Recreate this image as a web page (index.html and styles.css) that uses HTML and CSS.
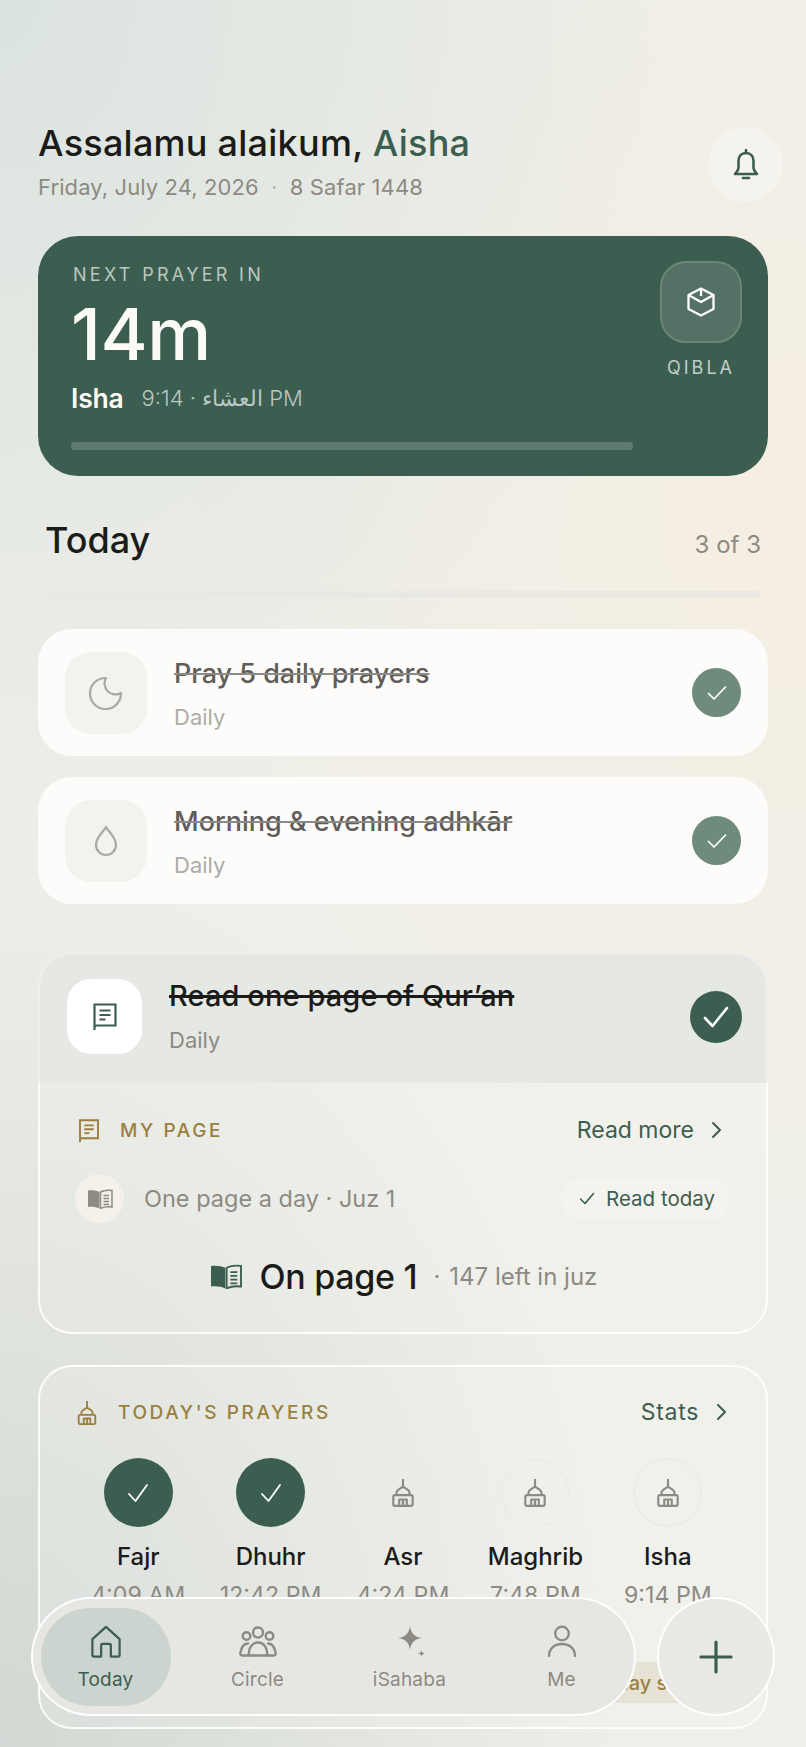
FILE: index.html
```html
<!DOCTYPE html>
<html lang="en">
<head>
<meta charset="utf-8">
<title>Today</title>
<link rel="stylesheet" href="styles.css">
</head>
<body>
<main class="page">
  <header class="top">
    <div>
      <h1 class="greet">Assalamu alaikum, <span class="greet-name">Aisha</span></h1>
      <p class="date">Friday, July 24, 2026 <span class="date-dot">·</span> 8 Safar 1448</p>
    </div>
    <button class="bell" aria-label="Notifications">
      <svg width="26" height="32" viewBox="0 0 26 32" fill="none" stroke="#3c5e50" stroke-width="2.6" stroke-linejoin="round"><path d="M13 4c-5 0-7.500 3.500-7.500 8v7c0 2-1.500 3.500-3.500 6h22c-2-2.500-3.500-4-3.500-6v-7c0-4.500-2.500-8-7.500-8Z"/><path d="M13 1v3" stroke-linecap="round"/><path d="M10 29h6" stroke-linecap="round"/></svg>
    </button>
  </header>

  <section class="hero">
    <div class="hero-main">
      <div class="hero-label">NEXT PRAYER IN</div>
      <div class="hero-time">14m</div>
      <div class="hero-next"><strong class="hero-name">Isha</strong><span class="hero-detail">9:14 · العشاء PM</span></div>
      <div class="hero-bar"></div>
    </div>
    <div class="qibla">
      <div class="qibla-box">
        <svg width="30" height="30" viewBox="0 0 30 30" fill="none" stroke="#fff" stroke-width="2.300" stroke-linejoin="round"><path d="M15 1.500 27.500 8v14L15 28.500 2.500 22V8Z"/><path d="M2.500 8 15 15l12.500-7"/><path d="M15 1.500V9"/></svg>
      </div>
      <div class="qibla-label">QIBLA</div>
    </div>
  </section>

  <section class="today">
    <div class="today-head">
      <h2 class="today-title">Today</h2>
      <span class="today-count">3 of 3</span>
    </div>
    <div class="today-track"></div>
  </section>

  <article class="task">
    <div class="task-icon">
      <svg width="34" height="34" viewBox="0 0 34 34" fill="none" stroke="#a9a8a3" stroke-width="2.200" stroke-linejoin="round"><path d="M17 2a11 11 0 0 0 15 15 15.500 15.500 0 1 1-15-15Z"/></svg>
    </div>
    <div class="task-text">
      <div class="task-title">Pray 5 daily prayers</div>
      <div class="task-sub">Daily</div>
    </div>
    <div class="check check-soft">
      <svg width="20" height="16" viewBox="0 0 20 16" fill="none" stroke="#fff" stroke-width="1.700" stroke-linecap="round" stroke-linejoin="round"><path d="M1.500 8.500 7 14 18.500 2"/></svg>
    </div>
  </article>

  <article class="task task-second">
    <div class="task-icon">
      <svg width="24" height="32" viewBox="0 0 24 32" fill="none" stroke="#a9a8a3" stroke-width="2.200" stroke-linejoin="round"><path d="M12 2c3 5.500 10 10 10 18a10 10 0 0 1-20 0C2 12 9 7.500 12 2Z"/></svg>
    </div>
    <div class="task-text">
      <div class="task-title">Morning &amp; evening adhkār</div>
      <div class="task-sub">Daily</div>
    </div>
    <div class="check check-soft">
      <svg width="20" height="16" viewBox="0 0 20 16" fill="none" stroke="#fff" stroke-width="1.700" stroke-linecap="round" stroke-linejoin="round"><path d="M1.500 8.500 7 14 18.500 2"/></svg>
    </div>
  </article>

  <article class="quran">
    <div class="quran-head">
      <div class="quran-icon">
        <svg width="24" height="28" viewBox="0 0 24 28" fill="none" stroke="#3c5e50" stroke-width="2.200"><path d="M1.500 27V1.500h21v21H4c-1.500 0-2.500 1-2.500 2.500"/><path d="M6.500 7.500h11M6.500 12h11M6.500 16.500h6"/></svg>
      </div>
      <div class="quran-text">
        <div class="quran-title">Read one page of Qur’an</div>
        <div class="task-sub task-sub-dark">Daily</div>
      </div>
      <div class="check check-strong">
        <svg width="26" height="22" viewBox="0 0 26 22" fill="none" stroke="#fff" stroke-width="2.600" stroke-linecap="round" stroke-linejoin="round"><path d="M2 12l7.500 8L24 2"/></svg>
      </div>
    </div>
    <div class="quran-body">
      <div class="row-head">
        <div class="row-label">
          <svg class="label-icon" width="22" height="24" viewBox="0 0 24 28" fill="none" stroke="#9a7f3f" stroke-width="2.200"><path d="M1.500 27V1.500h21v21H4c-1.500 0-2.500 1-2.500 2.500"/><path d="M6.500 7.500h11M6.500 12h11M6.500 16.500h6"/></svg>
          <span class="label-text">MY PAGE</span>
        </div>
        <div class="row-link"><span>Read more</span><svg width="11" height="18" viewBox="0 0 11 18" fill="none" stroke="#3c5e50" stroke-width="2" stroke-linecap="round" stroke-linejoin="round"><path d="M2 2l7 7-7 7"/></svg></div>
      </div>
      <div class="plan">
        <div class="plan-icon">
          <svg width="26" height="20" viewBox="0 0 26 20" fill="none"><path d="M12.500 3C9.500 1.500 5 1 1 1.500v16.500c4-.5 8.500 0 11.500 1.500Z" fill="#8d8a83"/><path d="M13.500 3c3-1.500 7.500-2 11.500-1.500V18c-4-.5-8.500 0-11.500 1.500Z" stroke="#8d8a83" stroke-width="1.500"/><path d="M16.500 6.500h5.500M16.500 9.500h5.500M16.500 12.500h5.500M16.500 15.500h5.500" stroke="#8d8a83" stroke-width="1.300"/></svg>
        </div>
        <span class="plan-text">One page a day · Juz 1</span>
        <div class="pill">
          <svg width="16" height="13" viewBox="0 0 16 13" fill="none" stroke="#3c5e50" stroke-width="1.600" stroke-linecap="round" stroke-linejoin="round"><path d="M1.500 7 6 11.500 14.500 1.500"/></svg>
          <span>Read today</span>
        </div>
      </div>
      <div class="onpage">
        <svg class="onpage-icon" width="34" height="25" viewBox="0 0 26 20" fill="none"><path d="M12.500 3C9.500 1.500 5 1 1 1.500v16.500c4-.5 8.500 0 11.500 1.500Z" fill="#3c5e50"/><path d="M13.500 3c3-1.500 7.500-2 11.500-1.500V18c-4-.5-8.500 0-11.500 1.500Z" stroke="#3c5e50" stroke-width="1.500"/><path d="M16.500 6.500h5.500M16.500 9.500h5.500M16.500 12.500h5.500M16.500 15.500h5.500" stroke="#3c5e50" stroke-width="1.300"/></svg>
        <strong class="onpage-num">On page 1</strong>
        <span class="onpage-dot">·</span>
        <span class="onpage-rest">147 left in juz</span>
      </div>
    </div>
  </article>

  <article class="prayers">
    <div class="prayers-head">
      <div class="row-label">
        <svg class="label-icon" width="22" height="24" viewBox="0 0 22 26" fill="none" stroke="#9a7f3f" stroke-width="2" stroke-linejoin="round"><path d="M11 0v7"/><path d="M5 15v-2.500C5 10 8.500 9 11 7c2.500 2 6 3 6 5.500V15"/><rect x="2" y="15" width="18" height="10" rx="1.500"/><path d="M7.500 25v-6h7v6M11 19v6"/></svg>
        <span class="label-text">TODAY'S PRAYERS</span>
      </div>
      <div class="row-link row-link-wide"><span>Stats</span><svg width="11" height="18" viewBox="0 0 11 18" fill="none" stroke="#3c5e50" stroke-width="2" stroke-linecap="round" stroke-linejoin="round"><path d="M2 2l7 7-7 7"/></svg></div>
    </div>
    <div class="times">
      <div class="time">
        <div class="time-dot time-done"><svg width="22" height="20" viewBox="0 0 22 20" fill="none" stroke="#fff" stroke-width="1.800" stroke-linecap="round" stroke-linejoin="round"><path d="M2 11l6.500 7L20 2"/></svg></div>
        <div class="time-name">Fajr</div><div class="time-at">4:09 AM</div>
      </div>
      <div class="time">
        <div class="time-dot time-done"><svg width="22" height="20" viewBox="0 0 22 20" fill="none" stroke="#fff" stroke-width="1.800" stroke-linecap="round" stroke-linejoin="round"><path d="M2 11l6.500 7L20 2"/></svg></div>
        <div class="time-name">Dhuhr</div><div class="time-at">12:42 PM</div>
      </div>
      <div class="time">
        <div class="time-dot"><svg width="24" height="28" viewBox="0 0 22 26" fill="none" stroke="#8d8a83" stroke-width="2" stroke-linejoin="round"><path d="M11 0v7"/><path d="M5 15v-2.500C5 10 8.500 9 11 7c2.500 2 6 3 6 5.500V15"/><rect x="2" y="15" width="18" height="10" rx="1.500"/><path d="M7.500 25v-6h7v6M11 19v6"/></svg></div>
        <div class="time-name">Asr</div><div class="time-at">4:24 PM</div>
      </div>
      <div class="time">
        <div class="time-dot"><svg width="24" height="28" viewBox="0 0 22 26" fill="none" stroke="#8d8a83" stroke-width="2" stroke-linejoin="round"><path d="M11 0v7"/><path d="M5 15v-2.500C5 10 8.500 9 11 7c2.500 2 6 3 6 5.500V15"/><rect x="2" y="15" width="18" height="10" rx="1.500"/><path d="M7.500 25v-6h7v6M11 19v6"/></svg></div>
        <div class="time-name">Maghrib</div><div class="time-at">7:48 PM</div>
      </div>
      <div class="time">
        <div class="time-dot"><svg width="24" height="28" viewBox="0 0 22 26" fill="none" stroke="#8d8a83" stroke-width="2" stroke-linejoin="round"><path d="M11 0v7"/><path d="M5 15v-2.500C5 10 8.500 9 11 7c2.500 2 6 3 6 5.500V15"/><rect x="2" y="15" width="18" height="10" rx="1.500"/><path d="M7.500 25v-6h7v6M11 19v6"/></svg></div>
        <div class="time-name">Isha</div><div class="time-at">9:14 PM</div>
      </div>
    </div>
    <div class="prayers-foot"><span class="streak">1 day streak</span></div>
  </article>
</main>

<nav class="dock">
  <div class="tabs">
    <div class="tab tab-active">
      <svg width="32" height="33" viewBox="0 0 32 34" fill="none" stroke="#3c5e50" stroke-width="2.300" stroke-linejoin="round"><path d="M2 14.500 16 2l14 12.500V31a1.500 1.500 0 0 1-1.500 1.500H21V21a1.500 1.500 0 0 0-1.500-1.500h-7A1.500 1.500 0 0 0 11 21v11.500H3.500A1.500 1.500 0 0 1 2 31Z"/></svg>
      <span>Today</span>
    </div>
    <div class="tab">
      <svg width="38" height="33" viewBox="0 0 38 32" fill="none" stroke="#8d8a83" stroke-width="2.400" stroke-linecap="round" stroke-linejoin="round"><circle cx="19" cy="7" r="5"/><circle cx="7.500" cy="10.500" r="3.800"/><circle cx="30.500" cy="10.500" r="3.800"/><path d="M10 30c-1-7 3-13 9-13s10 6 9 13Z"/><path d="M10 30H3c-2 0-2-2-1-5 1-4 3-7 7-7"/><path d="M28 30h7c2 0 2-2 1-5-1-4-3-7-7-7"/></svg>
      <span>Circle</span>
    </div>
    <div class="tab">
      <svg width="32" height="33" viewBox="0 0 32 33" fill="#8d8a83"><path d="M16 1c1 7 4 11 12 12-8 1-11 5-12 12-1-7-4-11-12-12 8-1 11-5 12-12Z"/><path d="M27.500 25c.3 2.300 1 3.100 3.500 3.500-2.500.4-3.200 1.200-3.500 3.500-.3-2.300-1-3.100-3.500-3.500 2.500-.4 3.200-1.200 3.500-3.500Z"/></svg>
      <span>iSahaba</span>
    </div>
    <div class="tab">
      <svg width="30" height="33" viewBox="0 0 30 33" fill="none" stroke="#8d8a83" stroke-width="2.300" stroke-linecap="round"><circle cx="15" cy="8.500" r="6.800"/><path d="M2 31c0-7 5-12 13-12s13 5 13 12"/></svg>
      <span>Me</span>
    </div>
  </div>
  <button class="add" aria-label="Add">
    <svg width="34" height="34" viewBox="0 0 34 34" fill="none" stroke="#3c5e50" stroke-width="3.200" stroke-linecap="round"><path d="M17 2v30M2 17h30"/></svg>
  </button>
</nav>
</body>
</html>
```

FILE: styles.css
```css
* { box-sizing: border-box; }

html, body { margin: 0; padding: 0; }

body {
  width: 806px;
  height: 1747px;
  overflow: hidden;
  position: relative;
  font-family: Inter, "DejaVu Sans", sans-serif;
  color: #1b1b19;
  background:
    radial-gradient(700px 900px at 0% 0%, #dbe3df 0%, rgba(219, 227, 223, 0) 100%),
    radial-gradient(620px 900px at 0% 100%, #d2d8d3 0%, rgba(210, 216, 211, 0) 100%),
    radial-gradient(620px 720px at 100% 30%, #f5eee2 0%, rgba(245, 238, 226, 0) 100%),
    #efefe9;
}

.page { padding: 121px 38px 0; }

.top { display: flex; justify-content: space-between; align-items: flex-end; }

.greet {
  margin: 0;
  font-size: 36px;
  line-height: 44px;
  font-weight: 500;
  letter-spacing: 0.25px;
  color: #1b1b19;
}

.greet-name { color: #3c5e50; }

.date {
  margin: 7px 0 0;
  font-size: 22px;
  line-height: 30px;
  letter-spacing: 0.1px;
  color: #8d8a83;
}

.date-dot { margin: 0 6px; color: #b5b3ac; }

.bell {
  width: 75px;
  height: 75px;
  margin-right: -15px;
  padding: 0;
  border: 0;
  border-radius: 50%;
  background: #f5f3ee;
  display: flex;
  align-items: center;
  justify-content: center;
}

.hero {
  margin-top: 34px;
  height: 240px;
  padding: 25px 26px 26px 33px;
  display: flex;
  gap: 27px;
  border-radius: 40px;
  background: #3c5e50;
}

.hero-main { flex: 1; padding-top: 3px; }

.hero-label {
  margin-left: 2px;
  font-size: 18px;
  line-height: 22px;
  letter-spacing: 3.300px;
  color: rgba(255, 255, 255, 0.66);
}

.hero-time {
  margin-top: 12px;
  font-size: 72px;
  line-height: 72px;
  font-weight: 500;
  letter-spacing: -0.5px;
  color: #fbfaf7;
}

.hero-next { margin-top: 12px; height: 32px; display: flex; align-items: center; gap: 18px; }

.hero-name { font-size: 26.500px; font-weight: 600; letter-spacing: -0.2px; color: #fbfaf7; }

.hero-detail { font-size: 22px; font-weight: 300; color: rgba(255, 255, 255, 0.66); }

.hero-bar {
  margin-top: 28px;
  height: 8px;
  border-radius: 4px;
  background: #5c7b6e;
}

.qibla { width: 82px; }

.qibla-box {
  width: 82px;
  height: 82px;
  border-radius: 26px;
  border: 2px solid #6b8679;
  background: #537265;
  display: flex;
  align-items: center;
  justify-content: center;
}

.qibla-label {
  margin-top: 14px;
  font-size: 18px;
  line-height: 22px;
  letter-spacing: 3px;
  text-align: center;
  color: rgba(255, 255, 255, 0.7);
}

.today { margin-top: 42px; padding: 0 7px; }

.today-head { display: flex; justify-content: space-between; align-items: baseline; }

.today-title {
  margin: 0;
  font-size: 36px;
  line-height: 44px;
  font-weight: 500;
  letter-spacing: 0;
}

.today-count { font-size: 24px; color: #8d8a83; }

.today-track {
  margin-top: 29px;
  height: 7px;
  border-radius: 4px;
  background: #e9e8e3;
}

.task {
  margin-top: 31px;
  height: 127px;
  padding: 0 27px 0 27px;
  display: flex;
  align-items: center;
  gap: 27px;
  border-radius: 34px;
  background: #fdfcfa;
}

.task-second { margin-top: 21px; }

.task-icon {
  width: 82px;
  height: 82px;
  border-radius: 26px;
  background: #f4f2ee;
  display: flex;
  align-items: center;
  justify-content: center;
  flex: none;
}

.task-text { flex: 1; padding-top: 4px; }

.quran-text { flex: 1; padding-top: 1px; }

.task-title {
  font-size: 27px;
  line-height: 32px;
  font-weight: 500;
  color: #5e5d59;
  text-decoration: line-through;
  text-decoration-thickness: 1.500px;
  text-decoration-color: #8c8b86;
}

.task-sub {
  margin-top: 12px;
  font-size: 22px;
  line-height: 30px;
  color: #adaca6;
}

.task-sub-dark { color: #8d8a83; margin-top: 13px; }

.check {
  display: flex;
  align-items: center;
  justify-content: center;
  border-radius: 50%;
  flex: none;
}

.check-soft { width: 49px; height: 49px; background: #6e8b7d; }

.check-strong { width: 52px; height: 52px; background: #3c5e50; }

.quran {
  margin-top: 48px;
  height: 382px;
  display: flex;
  flex-direction: column;
}

.quran-head {
  height: 131px;
  padding: 0 24px 4px 27px;
  display: flex;
  align-items: center;
  gap: 27px;
  border: 2px solid rgba(255, 255, 255, 0.35);
  border-bottom: 0;
  border-radius: 34px 34px 0 0;
  background: #e6e8e3;
}

.quran-icon {
  width: 75px;
  height: 75px;
  border-radius: 24px;
  background: #fff;
  display: flex;
  align-items: center;
  justify-content: center;
  flex: none;
}

.quran-title {
  font-size: 29px;
  line-height: 32px;
  font-weight: 500;
  letter-spacing: 0.1px;
  color: #1b1b19;
  text-decoration: line-through;
  text-decoration-thickness: 2.500px;
}

.quran-body {
  flex: 1;
  padding: 34px 44px 0 38px;
  border: 2px solid rgba(255, 255, 255, 0.85);
  border-top: 0;
  border-radius: 0 0 34px 34px;
  background: rgba(255, 255, 255, 0.14);
}

.row-head { height: 28px; display: flex; justify-content: space-between; align-items: center; }

.row-label { display: flex; align-items: center; gap: 20px; }

.label-text {
  font-size: 19px;
  line-height: 28px;
  font-weight: 500;
  letter-spacing: 2.600px;
  color: #9a7f3f;
}

.row-link {
  margin-bottom: 2px;
  display: flex;
  align-items: center;
  gap: 17px;
  font-size: 23px;
  font-weight: 400;
  color: #3c5e50;
}

.row-link-wide { letter-spacing: 0.7px; }

.plan {
  margin: 29px -8px 0 -3px;
  height: 49px;
  display: flex;
  align-items: center;
}

.plan-icon {
  width: 49px;
  height: 49px;
  border-radius: 50%;
  background: #f3f1ea;
  display: flex;
  align-items: center;
  justify-content: center;
  flex: none;
}

.plan-text { flex: 1; margin-left: 20px; font-size: 23.500px; color: #8d8a83; }

.pill {
  height: 42px;
  padding: 0 15px 0 18px;
  display: flex;
  align-items: center;
  gap: 11px;
  border-radius: 21px;
  background: #f5f3ee;
  font-size: 20.500px;
  font-weight: 400;
  color: #3c5e50;
}

.onpage {
  margin-top: 33px;
  height: 40px;
  padding-left: 6px;
  display: flex;
  align-items: center;
  justify-content: center;
  gap: 16px;
}

.onpage-icon { margin-right: 1px; }

.onpage-num { font-size: 34px; font-weight: 500; letter-spacing: -0.3px; color: #1b1b19; }

.onpage-dot { font-size: 24px; color: #8d8a83; }

.onpage-rest { font-size: 24px; color: #8d8a83; margin-left: -7px; }

.prayers {
  margin-top: 31px;
  height: 364px;
  padding: 32px 32px 0;
  border: 2px solid rgba(255, 255, 255, 0.85);
  border-radius: 34px;
  background: rgba(255, 255, 255, 0.16);
}

.prayers-head {
  height: 28px;
  padding: 0 7px 0 4px;
  display: flex;
  justify-content: space-between;
  align-items: center;
}

.times {
  margin-top: 31px;
  display: grid;
  grid-template-columns: repeat(5, 1fr);
}

.time { display: flex; flex-direction: column; align-items: center; }

.time-dot {
  width: 69px;
  height: 69px;
  border-radius: 50%;
  border: 2px solid #ecebe6;
  display: flex;
  align-items: center;
  justify-content: center;
}

.time-done { border: 0; background: #3c5e50; }

.time-name {
  margin-top: 15px;
  font-size: 24px;
  line-height: 30px;
  font-weight: 500;
  color: #1b1b19;
}

.time-at {
  margin-top: 8px;
  font-size: 23.200px;
  line-height: 30px;
  color: #8d8a83;
}

.prayers-foot { margin-top: 52px; display: flex; justify-content: flex-end; padding-right: 4px; }

.streak {
  height: 41px;
  padding: 0 14px;
  display: flex;
  align-items: center;
  border-radius: 10px;
  background: #e6e2d5;
  font-size: 20px;
  font-weight: 500;
  color: #9a7f3f;
}

.dock {
  position: absolute;
  left: 31px;
  top: 1597px;
  width: 744px;
  height: 119px;
  display: flex;
  justify-content: space-between;
}

.tabs {
  flex: none;
  width: 605px;
  display: grid;
  grid-template-columns: repeat(4, 152px);
  justify-content: center;
  align-items: center;
  justify-items: center;
  border: 2px solid rgba(255, 255, 255, 0.95);
  border-radius: 60px;
  background: #e6e7e3;
}

.tab {
  width: 130px;
  height: 98px;
  padding-top: 17px;
  display: flex;
  flex-direction: column;
  align-items: center;
  gap: 10px;
  border-radius: 49px;
  font-size: 19px;
  line-height: 24px;
  letter-spacing: 0.2px;
  color: #8d8a83;
}

.tab-active { background: #ccd4cf; color: #3c5e50; }

.add {
  flex: none;
  width: 118px;
  height: 119px;
  padding: 0;
  border: 2px solid rgba(255, 255, 255, 0.95);
  border-radius: 50%;
  background: #e9eae6;
  display: flex;
  align-items: center;
  justify-content: center;
}
```
